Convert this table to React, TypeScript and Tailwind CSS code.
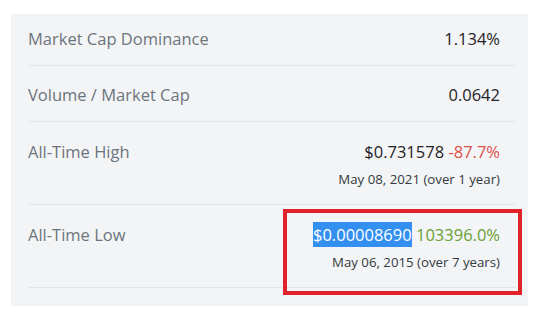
const rows = [
  { label: "Market Cap Dominance", value: "1.134%" },
  { label: "Volume / Market Cap", value: "0.0642" },
];

export default function App() {
  return (
    <div className="w-[541px] h-[324px] bg-white pt-[14px] pl-[11px] font-['Open_Sans',sans-serif]">
      <div className="relative w-[517px] h-[292px] bg-[#f3f4f6] pl-[17px] pr-[12px]">
        <div className="flex h-[52px] items-center justify-between border-b border-[#e3e5e8] pr-[16px]">
          <span className="text-[16.5px] text-[#6c757d]">{rows[0].label}</span>
          <span className="text-[16.5px] font-medium text-[#1f2327]">{rows[0].value}</span>
        </div>
        <div className="flex h-[56px] items-center justify-between border-b border-[#e3e5e8] pr-[16px] pt-[4px]">
          <span className="text-[16.5px] text-[#6c757d]">{rows[1].label}</span>
          <span className="text-[16.5px] font-medium text-[#1f2327]">{rows[1].value}</span>
        </div>
        <div className="flex h-[83px] justify-between border-b border-[#e3e5e8] pr-[16px] pt-[19px]">
          <span className="text-[16.5px] leading-[22px] text-[#6c757d]">All-Time High</span>
          <div className="flex flex-col items-end">
            <div className="text-[16.5px] leading-[22px] font-medium text-[#1f2327]">
              $0.731578 <span className="text-[#dc5048]">-87.7%</span>
            </div>
            <div className="mt-[6px] text-[13.25px] leading-[20px] text-[#343a40]">May 08, 2021 (over 1 year)</div>
          </div>
        </div>
        <div className="flex h-[83px] justify-between border-b border-[#e3e5e8] pr-[16px] pt-[19px]">
          <span className="text-[16.5px] leading-[22px] text-[#6c757d]">All-Time Low</span>
          <div className="flex flex-col items-end">
            <div className="text-[16.5px] leading-[22px] font-medium text-[#1f2327]">
              <span className="bg-[#3390f0] text-white py-[1px]">$0.00008690</span>{" "}
              <span className="text-[#6a9f35]">103396.0%</span>
            </div>
            <div className="mt-[6px] text-[13.25px] leading-[20px] text-[#343a40]">May 06, 2015 (over 7 years)</div>
          </div>
        </div>
        <div className="absolute left-[272px] top-[195px] w-[239px] h-[86px] border-[4px] border-[#e0222b]" />
      </div>
    </div>
  );
}
